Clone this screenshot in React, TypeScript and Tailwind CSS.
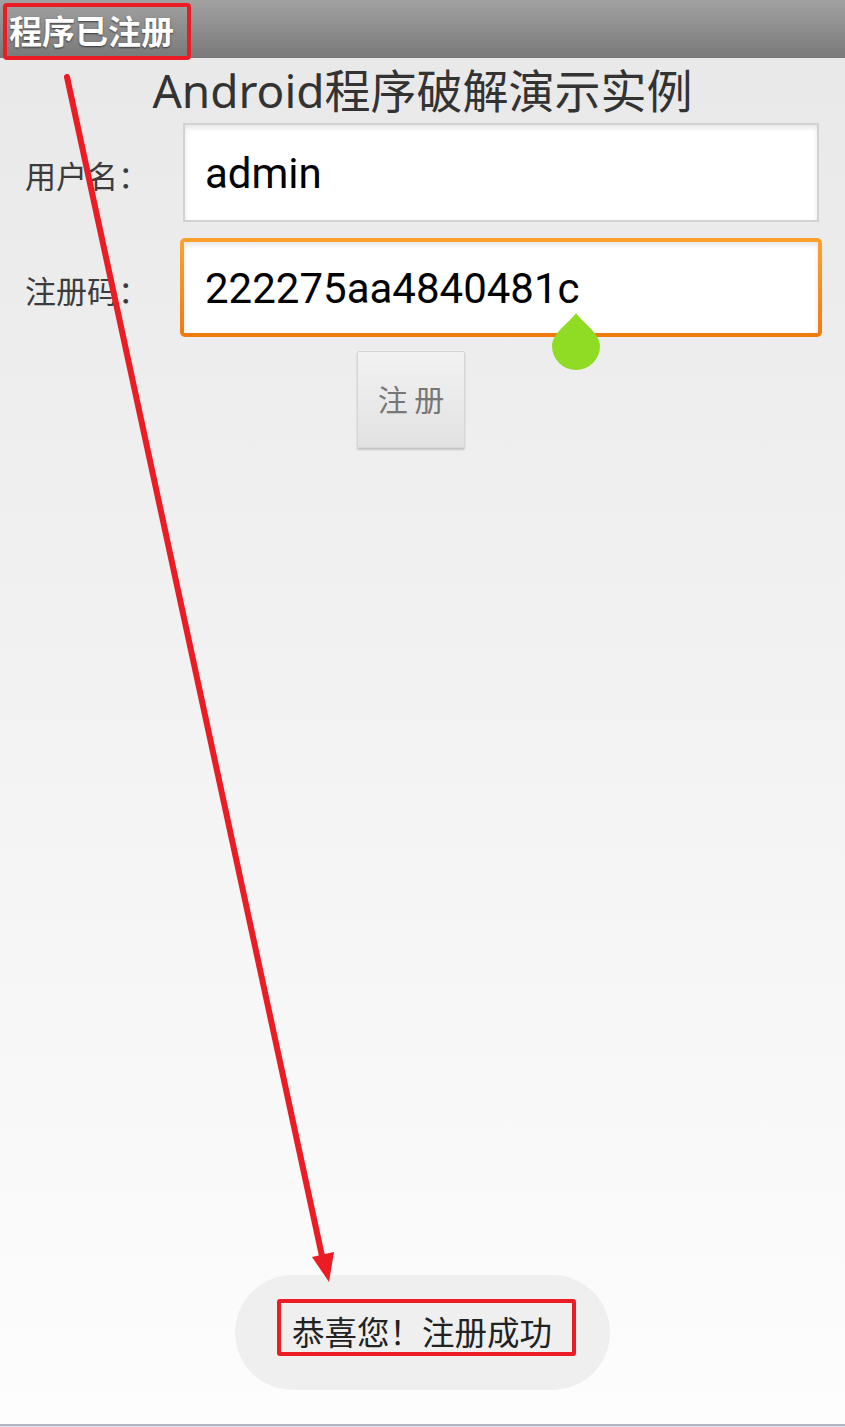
import React from "react";

export default function App() {
  return (
    <div className="relative w-[845px] h-[1427px] overflow-hidden flex flex-col bg-gradient-to-b from-[#e8e8e8] to-[#fdfdfd] font-['Noto_Sans','Noto_Sans_CJK_SC',sans-serif]">
      {/* title bar */}
      <div className="h-[58px] shrink-0 bg-gradient-to-b from-[#a2a2a2] to-[#797979] flex items-start pl-[3px] pt-[3px] overflow-visible">
        <div className="w-[188px] h-[57px] border-4 border-[#ec1c24] rounded-[4px] flex items-center pl-[2px] pb-[2px] text-[33px] font-bold text-white leading-none [text-shadow:0_1px_2px_rgba(0,0,0,0.6)] font-['Noto_Sans_CJK_SC',sans-serif] relative z-10 whitespace-nowrap">
          程序已注册
        </div>
      </div>

      {/* title */}
      <div className="h-[65px] shrink-0 text-center text-[46px] leading-[65px] text-[#333333] font-['Noto_Sans','Noto_Sans_CJK_SC',sans-serif]">
        Android程序破解演示实例
      </div>

      {/* row 1 */}
      <div className="flex items-center h-[99px] shrink-0">
        <div className="w-[183px] pl-[25px] pt-[4px] text-[31px] leading-none text-[#3c3c3c] font-['Noto_Sans_CJK_SC',sans-serif] whitespace-nowrap">
          用户名：
        </div>
        <div className="w-[636px] h-[99px] border-2 border-[#d2d2d2] bg-white shadow-[inset_0_3px_5px_rgba(0,0,0,0.10)] flex items-center pl-[20px] pt-[3px] text-[42px] leading-none text-black font-['Roboto',sans-serif]">
          admin
        </div>
      </div>

      {/* row 2 */}
      <div className="flex items-center h-[99px] mt-[16px] shrink-0">
        <div className="w-[180px] pl-[25px] pt-[4px] text-[31px] leading-none text-[#3c3c3c] font-['Noto_Sans_CJK_SC',sans-serif] whitespace-nowrap">
          注册码：
        </div>
        <div className="w-[642px] h-[99px] rounded-[5px] p-[4px] bg-gradient-to-b from-[#ffa12e] to-[#f07a0c]">
          <div className="w-full h-full bg-white shadow-[inset_0_3px_5px_rgba(0,0,0,0.10)] flex items-center pl-[21px] pt-[3px] text-[42px] leading-none text-black font-['Roboto',sans-serif]">
            222275aa4840481c
          </div>
        </div>
      </div>

      {/* button */}
      <div className="ml-[357px] mt-[14px] w-[108px] h-[97px] shrink-0 border border-[#d6d6d6] rounded-[2px] bg-gradient-to-b from-[#f2f2f2] to-[#e2e2e2] shadow-[0_2px_2px_rgba(0,0,0,0.18)] flex items-center justify-center pb-[4px] text-[30px] leading-none text-[#777777] font-['Noto_Sans_CJK_SC',sans-serif]">
        注 册
      </div>

      <div className="flex-1" />

      {/* toast */}
      <div className="mx-auto w-[375px] h-[115px] shrink-0 rounded-full bg-[#efefef] pt-[24px] pl-[42px]">
        <div className="w-[299px] h-[57px] border-4 border-[#ec1c24] rounded-[3px] flex items-center pl-[11px] pt-[8px] text-[32.5px] leading-none text-[#222222] font-['Noto_Sans_CJK_SC',sans-serif] whitespace-nowrap">
          恭喜您！注册成功
        </div>
      </div>

      <div className="h-[34px] shrink-0" />
      <div className="h-[3px] shrink-0 border-t-2 border-[#b1b5c2] bg-[#dfe1ea]" />

      {/* cursor handle */}
      <svg className="absolute left-[552px] top-[313px]" width="48" height="57" viewBox="0 0 48 57">
        <path d="M24 0 C30 9 48 20 48 33 A24 24 0 0 1 0 33 C0 20 18 9 24 0 Z" fill="#90dc24" />
      </svg>

      {/* annotation arrow */}
      <svg className="absolute left-0 top-0 pointer-events-none" width="845" height="1427" viewBox="0 0 845 1427">
        <line x1="67" y1="77" x2="322" y2="1256" stroke="#ec1c24" strokeWidth="6" strokeLinecap="round" />
        <polygon points="329,1282 334,1252 312,1257" fill="#ec1c24" />
      </svg>
    </div>
  );
}
